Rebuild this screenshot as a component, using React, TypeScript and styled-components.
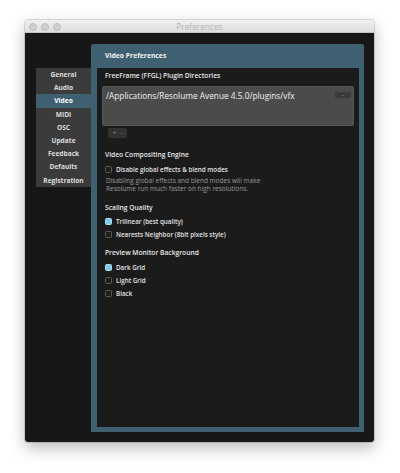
import React from 'react';
import styled, { createGlobalStyle } from 'styled-components';

const GlobalStyle = createGlobalStyle`
  html, body {
    margin: 0;
    padding: 0;
    background: #ffffff;
  }
  body {
    font-family: "Open Sans", "Noto Sans", sans-serif;
    -webkit-font-smoothing: antialiased;
  }
`;

const PANEL_BLUE = '#3f6070';

const menuItems = ['General', 'Audio', 'Video', 'MIDI', 'OSC', 'Update', 'Feedback', 'Defaults', 'Registration'];

type Option = { label: string; checked?: boolean };

const scalingOptions: Option[] = [
  { label: 'Trilinear (best quality)', checked: true },
  { label: 'Nearests Neighbor (8bit pixels style)' },
];

const backgroundOptions: Option[] = [
  { label: 'Dark Grid', checked: true },
  { label: 'Light Grid' },
  { label: 'Black' },
];

export default function App(): JSX.Element {
  return <Page>
    <GlobalStyle />
    <Window>
      <TitleBar>
        <Lights>
          <Light />
          <Light />
          <Light />
        </Lights>
        <Title>Preferences</Title>
      </TitleBar>
      <Body>
        <Sidebar>
          { menuItems.map(item =>
            <MenuItem key={ item } $active={ item === 'Video' }>{ item }</MenuItem>
          ) }
        </Sidebar>
        <Panel>
          <PanelHeader>Video Preferences</PanelHeader>
          <Inner>
            <SectionTitle>FreeFrame (FFGL) Plugin Directories</SectionTitle>
            <DirList>
              <DirPath>/Applications/Resolume Avenue 4.5.0/plugins/vfx</DirPath>
              <RemoveButton>–</RemoveButton>
            </DirList>
            <AddRemove>
              <span>+</span>
              <span>-</span>
            </AddRemove>

            <SectionTitle $top={ 12 } $bottom={ 3 }>Video Compositing Engine</SectionTitle>
            <CheckRow>
              <Box />
              <Label>Disable global effects &amp; blend modes</Label>
            </CheckRow>
            <Note>
              Disabling global effects and blend modes will make<br />
              Resolume run much faster on high resolutions.
            </Note>

            <SectionTitle $top={ 10 } $bottom={ 2 }>Scaling Quality</SectionTitle>
            { scalingOptions.map(o =>
              <CheckRow key={ o.label }>
                <Box $checked={ o.checked } />
                <Label>{ o.label }</Label>
              </CheckRow>
            ) }

            <SectionTitle $top={ 7 } $bottom={ 3 }>Preview Monitor Background</SectionTitle>
            { backgroundOptions.map(o =>
              <CheckRow key={ o.label }>
                <Box $checked={ o.checked } />
                <Label>{ o.label }</Label>
              </CheckRow>
            ) }
          </Inner>
        </Panel>
      </Body>
    </Window>
  </Page>;
}

const Page = styled.div`
  width: 400px;
  height: 473px;
  padding: 20px 0 0 25px;
  box-sizing: border-box;
`;

const Window = styled.div`
  width: 349px;
  height: 422px;
  display: flex;
  flex-direction: column;
  border-radius: 3px;
  overflow: hidden;
  box-shadow: 0 6px 16px rgba(0, 0, 0, 0.28), 0 0 0 1px rgba(0, 0, 0, 0.12);
`;

const TitleBar = styled.div`
  height: 13px;
  flex: none;
  position: relative;
  display: flex;
  align-items: center;
  justify-content: center;
  background: linear-gradient(#f0f0f0, #dedede);
  border-bottom: 1px solid #c4c4c4;
  box-sizing: border-box;
`;

const Lights = styled.div`
  position: absolute;
  left: 4px;
  top: 2.5px;
  display: flex;
  gap: 4px;
`;

const Light = styled.div`
  width: 8px;
  height: 8px;
  border-radius: 50%;
  background: #d0d0d0;
  border: 0.5px solid #bdbdbd;
  box-sizing: border-box;
`;

const Title = styled.div`
  font-size: 8.4px;
  color: #b4b4b4;
  line-height: 13px;
`;

const Body = styled.div`
  flex: 1;
  display: flex;
  align-items: flex-start;
  background: #171717;
  padding: 11px 10px 10px 11px;
`;

const Sidebar = styled.div`
  width: 55px;
  margin-top: 24px;
  background: #3b3b3b;
  display: flex;
  flex-direction: column;
`;

const MenuItem = styled.div<{ $active?: boolean }>`
  height: 13.2px;
  line-height: 13.2px;
  text-align: center;
  font-size: 6.6px;
  font-weight: 700;
  color: ${ p => p.$active ? '#ffffff' : '#dcdcdc' };
  background: ${ p => p.$active ? PANEL_BLUE : 'transparent' };
`;

const Panel = styled.div`
  flex: 1;
  align-self: stretch;
  display: flex;
  flex-direction: column;
  background: ${ PANEL_BLUE };
  border-radius: 2px 2px 0 0;
  padding: 0 5px 5px 6px;
`;

const PanelHeader = styled.div`
  height: 24px;
  line-height: 24px;
  padding-left: 8px;
  font-size: 6.8px;
  font-weight: 700;
  color: #f2f2f2;
`;

const Inner = styled.div`
  flex: 1;
  background: #1b1b1b;
  display: flex;
  flex-direction: column;
  padding: 3px 5px 0 5px;
`;

const SectionTitle = styled.div<{ $top?: number; $bottom?: number }>`
  margin-top: ${ p => p.$top ?? 0 }px;
  margin-bottom: ${ p => p.$bottom ?? 0 }px;
  padding-left: 3px;
  font-size: 6.7px;
  font-weight: 600;
  line-height: 10px;
  color: #e8e8e8;
`;

const DirList = styled.div`
  margin-top: 5px;
  height: 40px;
  background: #4b4b4b;
  border-radius: 2px;
  border: 1px solid #565656;
  box-sizing: border-box;
  display: flex;
  align-items: flex-start;
  justify-content: space-between;
  padding: 3px 2px 0 3px;
`;

const DirPath = styled.div`
  font-size: 8.3px;
  color: #f0f0f0;
  line-height: 11px;
`;

const RemoveButton = styled.div`
  width: 16px;
  height: 6px;
  margin-top: 2px;
  background: #3a3a3a;
  border-radius: 1.5px;
  color: #999;
  font-size: 5px;
  line-height: 6px;
  text-align: center;
`;

const AddRemove = styled.div`
  margin: 2px 0 0 6px;
  width: 19px;
  height: 10px;
  background: #333333;
  border-radius: 2px;
  display: flex;
  justify-content: center;
  gap: 4px;
  font-size: 6px;
  line-height: 10px;
  color: #9a9a9a;
`;

const CheckRow = styled.div`
  display: flex;
  align-items: center;
  height: 13px;
  padding-left: 3px;
  gap: 4px;
`;

const Box = styled.div<{ $checked?: boolean }>`
  width: 7px;
  height: 7px;
  box-sizing: border-box;
  border-radius: 1.5px;
  border: 1px solid ${ p => p.$checked ? '#a9dcef' : '#5a5a5a' };
  background: ${ p => p.$checked ? '#7fcbe6' : '#1f1f1f' };
`;

const Label = styled.div`
  font-size: 6.3px;
  font-weight: 600;
  color: #e2e2e2;
  line-height: 10px;
`;

const Note = styled.div`
  margin-top: 1px;
  padding-left: 4px;
  font-size: 6.5px;
  line-height: 8px;
  color: #9a9a9a;
`;
